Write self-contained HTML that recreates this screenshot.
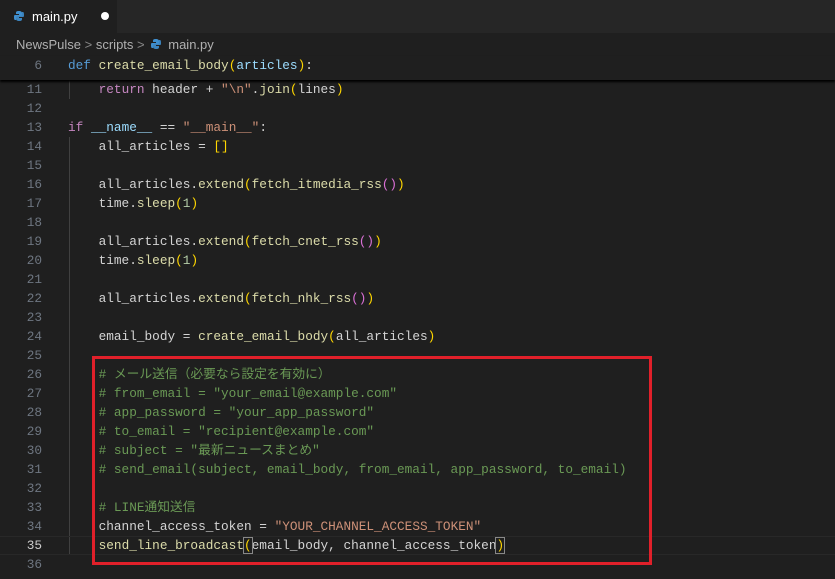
<!DOCTYPE html>
<html><head><meta charset="utf-8"><style>
body{margin:0;width:835px;height:579px;background:#1f1f1f;overflow:hidden;position:relative;font-family:"Liberation Sans","Noto Sans CJK JP",sans-serif}
.tabbar{position:absolute;left:0;top:0;width:835px;height:33px;background:#262626}
.tab{position:absolute;left:0;top:0;width:117px;height:33px;background:#1f1f1f;color:#fff;font-size:13px}
.tab .n{position:absolute;left:32px;top:9px}
.dot{position:absolute;left:101px;top:12px;width:8px;height:8px;border-radius:50%;background:#fff}
.py{position:absolute;width:10px;height:10px}
.crumb{position:absolute;left:16px;top:37px;color:#b0b0b0;font-size:13px;white-space:nowrap}
.code{font-family:"Liberation Mono","Noto Sans CJK JP",monospace;font-size:12.75px}
.ln{position:absolute;left:0;width:42px;text-align:right;color:#6e7681;height:19px;line-height:19px}
.l{position:absolute;left:68px;height:19px;line-height:19px;white-space:pre;color:#d4d4d4}
.k{color:#569cd6}.f{color:#dcdcaa}.p{color:#9cdcfe}.c{color:#c586c0}.s{color:#ce9178}.cm{color:#6a9955}.y{color:#ffd700}.m{color:#da70d6}.num{color:#b5cea8}
.sticky{position:absolute;left:0;top:56px;width:835px;height:24px;background:#1f1f1f;box-shadow:0 2px 2px #000;z-index:2}
.guide{position:absolute;left:69px;width:1px;background:#404040}
.box{position:absolute;left:92px;top:356px;width:554px;height:203px;border:3px solid #e0202a;z-index:3}
.cur{position:absolute;left:0;top:536px;width:835px;height:17px;border-top:1px solid #282828;border-bottom:1px solid #282828}
.bb{outline:1px solid #888}
</style></head><body>
<div class="tabbar"><div class="tab">
<svg class="py" style="left:14px;top:11px" viewBox="0 0 10 10"><path d="M5 0C2 0 2 1 2 2v1h3v1H1C0 4 0 5 0 6s0 3 1 3h1V7c0-1 1-2 2-2h3c1 0 1-1 1-1V2C8 1 7 0 5 0z" fill="#3f8fcf"/><path d="M5 10c3 0 3-1 3-2V7H5V6h4c1 0 1-1 1-2s0-3-1-3H8v2c0 1-1 2-2 2H3C2 5 2 6 2 6v2c0 1 1 2 3 2z" fill="#3f8fcf" opacity=".9"/></svg>
<span class="n">main.py</span><div class="dot"></div></div></div>
<div class="crumb">NewsPulse <span style="color:#888">&gt;</span> scripts <span style="color:#888">&gt;</span> <span style="display:inline-block;width:20px"></span>main.py</div>
<svg class="py" style="left:151px;top:39px" viewBox="0 0 10 10"><path d="M5 0C2 0 2 1 2 2v1h3v1H1C0 4 0 5 0 6s0 3 1 3h1V7c0-1 1-2 2-2h3c1 0 1-1 1-1V2C8 1 7 0 5 0z" fill="#3f8fcf"/><path d="M5 10c3 0 3-1 3-2V7H5V6h4c1 0 1-1 1-2s0-3-1-3H8v2c0 1-1 2-2 2H3C2 5 2 6 2 6v2c0 1 1 2 3 2z" fill="#3f8fcf" opacity=".9"/></svg>
<div class="code">
<div class="sticky"><div class="ln" style="top:0">6</div><div class="l" style="top:0;left:68px"><span class="k">def</span> <span class="f">create_email_body</span><span class="y">(</span><span class="p">articles</span><span class="y">)</span>:</div></div>
<div class="guide" style="top:80px;height:19px"></div>
<div class="guide" style="top:137px;height:418px"></div>
<div class="cur"></div>
<div class="ln" style="top:80px">11</div><div class="l" style="top:80px">    <span class="c">return</span> header + <span class="s">"\n"</span>.<span class="f">join</span><span class="y">(</span>lines<span class="y">)</span></div>
<div class="ln" style="top:99px">12</div>
<div class="ln" style="top:118px">13</div><div class="l" style="top:118px"><span class="c">if</span> <span class="p">__name__</span> == <span class="s">"__main__"</span>:</div>
<div class="ln" style="top:137px">14</div><div class="l" style="top:137px">    all_articles = <span class="y">[]</span></div>
<div class="ln" style="top:156px">15</div>
<div class="ln" style="top:175px">16</div><div class="l" style="top:175px">    all_articles.<span class="f">extend</span><span class="y">(</span><span class="f">fetch_itmedia_rss</span><span class="m">()</span><span class="y">)</span></div>
<div class="ln" style="top:194px">17</div><div class="l" style="top:194px">    time.<span class="f">sleep</span><span class="y">(</span><span class="num">1</span><span class="y">)</span></div>
<div class="ln" style="top:213px">18</div>
<div class="ln" style="top:232px">19</div><div class="l" style="top:232px">    all_articles.<span class="f">extend</span><span class="y">(</span><span class="f">fetch_cnet_rss</span><span class="m">()</span><span class="y">)</span></div>
<div class="ln" style="top:251px">20</div><div class="l" style="top:251px">    time.<span class="f">sleep</span><span class="y">(</span><span class="num">1</span><span class="y">)</span></div>
<div class="ln" style="top:270px">21</div>
<div class="ln" style="top:289px">22</div><div class="l" style="top:289px">    all_articles.<span class="f">extend</span><span class="y">(</span><span class="f">fetch_nhk_rss</span><span class="m">()</span><span class="y">)</span></div>
<div class="ln" style="top:308px">23</div>
<div class="ln" style="top:327px">24</div><div class="l" style="top:327px">    email_body = <span class="f">create_email_body</span><span class="y">(</span>all_articles<span class="y">)</span></div>
<div class="ln" style="top:346px">25</div>
<div class="ln" style="top:365px">26</div><div class="l cm" style="top:365px">    # メール送信（必要なら設定を有効に）</div>
<div class="ln" style="top:384px">27</div><div class="l cm" style="top:384px">    # from_email = "your_email@example.com"</div>
<div class="ln" style="top:403px">28</div><div class="l cm" style="top:403px">    # app_password = "your_app_password"</div>
<div class="ln" style="top:422px">29</div><div class="l cm" style="top:422px">    # to_email = "recipient@example.com"</div>
<div class="ln" style="top:441px">30</div><div class="l cm" style="top:441px">    # subject = "最新ニュースまとめ"</div>
<div class="ln" style="top:460px">31</div><div class="l cm" style="top:460px">    # send_email(subject, email_body, from_email, app_password, to_email)</div>
<div class="ln" style="top:479px">32</div>
<div class="ln" style="top:498px">33</div><div class="l cm" style="top:498px">    # LINE通知送信</div>
<div class="ln" style="top:517px">34</div><div class="l" style="top:517px">    channel_access_token = <span class="s">"YOUR_CHANNEL_ACCESS_TOKEN"</span></div>
<div class="ln" style="top:536px;color:#ccc">35</div><div class="l" style="top:536px">    <span class="f">send_line_broadcast</span><span class="y bb">(</span>email_body, channel_access_token<span class="y bb">)</span></div>
<div class="ln" style="top:555px">36</div>
</div>
<div class="box"></div>
</body></html>
